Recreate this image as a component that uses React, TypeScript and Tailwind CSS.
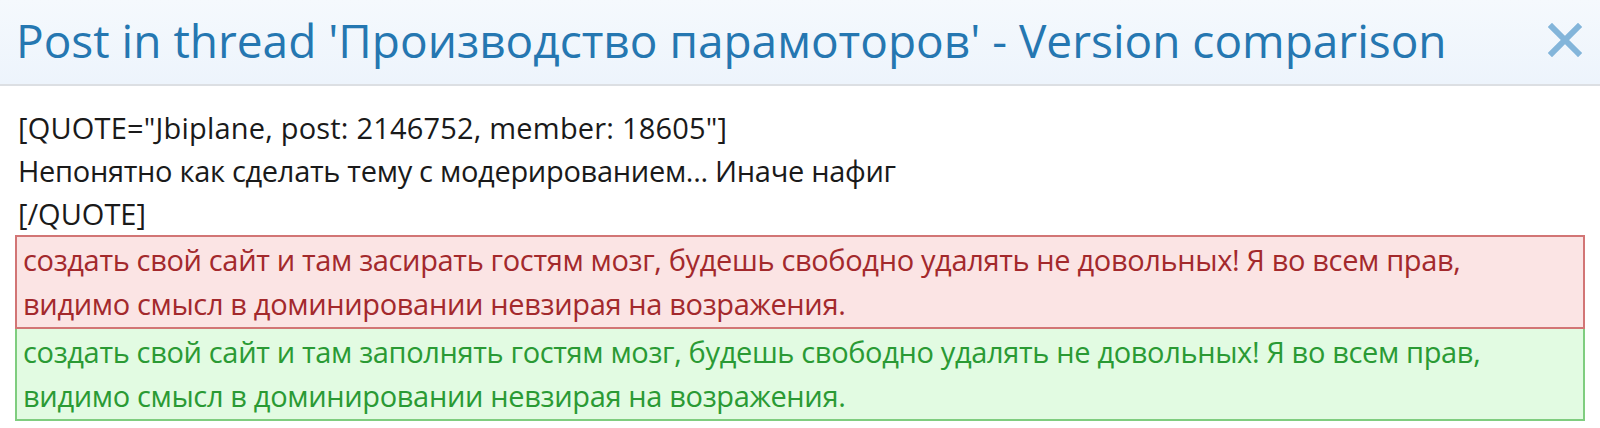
export default function App() {
  const font = { fontFamily: '"Open Sans", "Noto Sans", sans-serif' };
  return (
    <div className="w-[1600px] h-[428px] bg-white overflow-hidden" style={font}>
      <div className="h-[86px] flex items-center justify-between pl-[16px] pr-[18px] pb-[4px] bg-gradient-to-b from-[#f5f9fd] to-[#edf4fc] border-b-2 border-[#dcdfe3]">
        <h2 className="text-[46px] leading-none text-[#2577b1] whitespace-nowrap">
          Post in thread 'Производство парамоторов' - Version comparison
        </h2>
        <svg width="34" height="34" viewBox="0 0 34 34">
          <path d="M4 4 L30 30 M30 4 L4 30" stroke="#83b5da" strokeWidth="6" strokeLinecap="square" />
        </svg>
      </div>
      <div className="px-[15px] pt-[20px] text-[29px] leading-[43px] text-[#1a1a1a] whitespace-nowrap">
        <div className="pl-[3px] tracking-[0.2px]">[QUOTE="Jbiplane, post: 2146752, member: 18605"]</div>
        <div className="pl-[3px] tracking-[-0.3px]">Непонятно как сделать тему с модерированием... Иначе нафиг</div>
        <div className="pl-[3px]">[/QUOTE]</div>
        <div className="border-2 border-[#d27575] bg-[#fbe4e4] text-[#a3292c] px-[6px] py-[1px] leading-[44px] tracking-[-0.35px]">
          создать свой сайт и там засирать гостям мозг, будешь свободно удалять не довольных! Я во всем прав,<br />
          видимо смысл в доминировании невзирая на возражения.
        </div>
        <div className="border-2 border-t-0 border-[#7fcd7f] bg-[#e2fbe2] text-[#2a9a34] px-[6px] py-[1px] leading-[44px] tracking-[-0.35px]">
          создать свой сайт и там заполнять гостям мозг, будешь свободно удалять не довольных! Я во всем прав,<br />
          видимо смысл в доминировании невзирая на возражения.
        </div>
      </div>
    </div>
  );
}
